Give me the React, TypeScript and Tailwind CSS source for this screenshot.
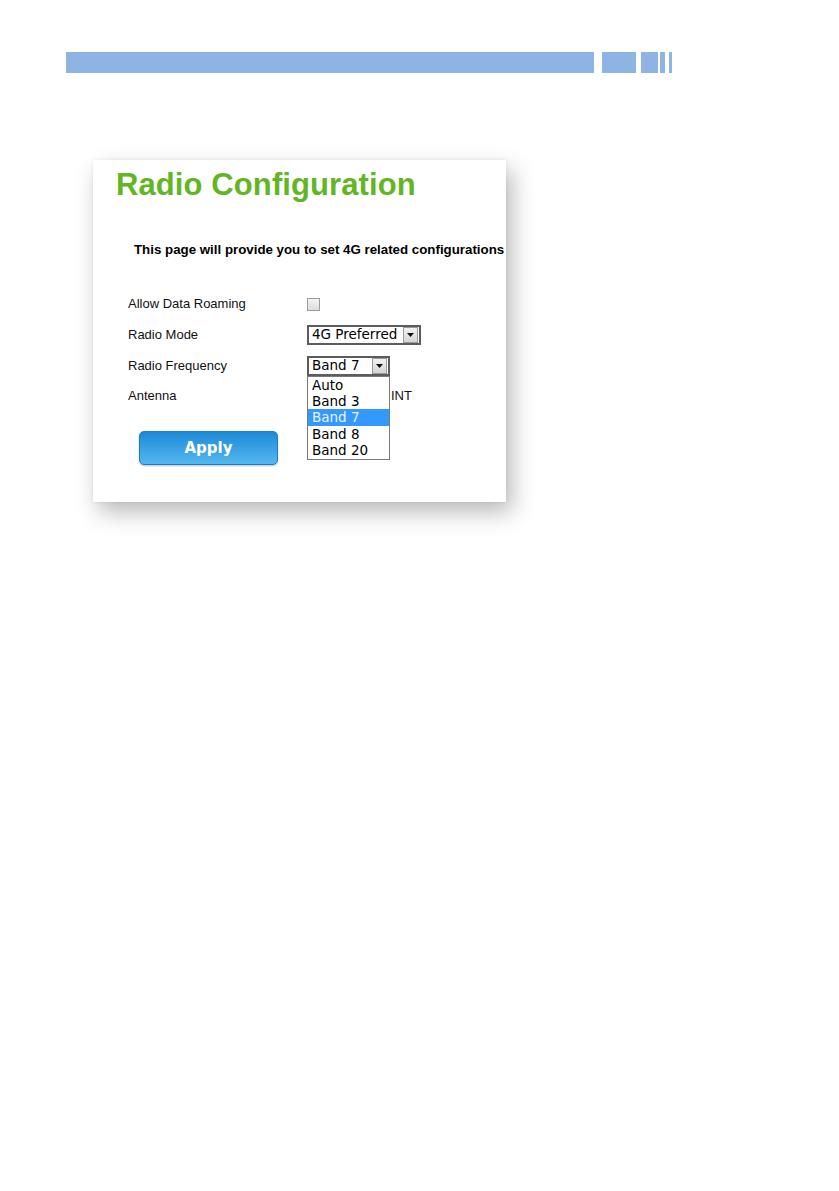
import React from "react";

const sans = { fontFamily: '"Liberation Sans", Arial, sans-serif' };
const verdana = { fontFamily: '"DejaVu Sans", Verdana, sans-serif' };

function Arrow() {
  return (
    <span className="flex h-[16px] w-[15px] items-center justify-center border border-[#9a9a9a] bg-gradient-to-b from-[#f2f2f2] to-[#d4d4d4]">
      <svg width="7" height="4" viewBox="0 0 7 4">
        <path d="M0 0h7L3.5 4z" fill="#111" />
      </svg>
    </span>
  );
}

const bands = ["Auto", "Band 3", "Band 7", "Band 8", "Band 20"];

export default function App() {
  return (
    <div className="h-[1191px] w-[839px] bg-white pt-[52px]" style={sans}>
      {/* header strip */}
      <div className="flex h-[21px] pl-[66px]">
        <div className="w-[528px] bg-[#8db4e2]" />
        <div className="ml-[8px] w-[34px] bg-[#8db4e2]" />
        <div className="ml-[5px] w-[17px] bg-[#8db4e2]" />
        <div className="ml-[2px] w-[5px] bg-[#8db4e2]" />
        <div className="ml-[4px] w-[3px] bg-[#8db4e2]" />
      </div>

      {/* screenshot card */}
      <div className="ml-[93px] mt-[87px] h-[342px] w-[413px] overflow-hidden bg-white pl-[23px] pt-[7px] shadow-[6px_10px_22px_rgba(0,0,0,0.28),0_0_3px_rgba(0,0,0,0.08)]">
        <h1 className="text-[31px] font-bold leading-[36px] tracking-[0.1px] text-[#62b624]">Radio Configuration</h1>
        <p className="ml-[18px] mt-[39px] whitespace-nowrap text-[13.3px] font-bold leading-[16px] text-black">
          This page will provide you to set 4G related configurations
        </p>

        <div className="ml-[12px] mt-[31px] grid grid-cols-[179px_auto] text-[13px] text-[#111]">
          <div className="flex h-[30px] items-center">Allow Data Roaming</div>
          <div className="flex h-[30px] items-center">
            <span className="h-[13px] w-[13px] border border-[#9c9c9c] bg-gradient-to-b from-[#f4f4f4] to-[#dcdcdc]" />
          </div>

          <div className="flex h-[31px] items-center">Radio Mode</div>
          <div className="flex h-[31px] items-center">
            <div className="flex h-[20px] w-[114px] items-center justify-between border-2 border-[#5c5c5c] pl-[3px] pr-[1px] text-[13.5px] text-black" style={verdana}>
              <span>4G Preferred</span>
              <Arrow />
            </div>
          </div>

          <div className="flex h-[31px] items-center">Radio Frequency</div>
          <div className="flex h-[31px] items-center">
            <div className="relative z-10">
              <div className="flex h-[20px] w-[83px] items-center justify-between border-2 border-[#5c5c5c] pl-[3px] pr-[1px] text-[13.5px] text-black" style={verdana}>
                <span>Band 7</span>
                <Arrow />
              </div>
              <ul className="absolute left-0 top-full w-[83px] border border-[#7a7a7a] bg-white text-[13.5px] leading-[16.4px] text-black" style={verdana}>
                {bands.map((b) => (
                  <li key={b} className={`pl-[4px] ${b === "Band 7" ? "bg-[#3399ff] text-[#eaf4ff]" : ""}`}>
                    {b}
                  </li>
                ))}
              </ul>
            </div>
          </div>

          <div className="flex h-[30px] items-center">Antenna</div>
          <div className="flex h-[30px] items-center">
            <span className="h-[13px] w-[13px] rounded-full border border-[#8a8a8a] bg-[#f0f0f0]" />
            <span className="ml-[52px] h-[13px] w-[13px] rounded-full border border-[#8a8a8a] bg-[#f0f0f0]" />
            <span className="ml-[6px]">INT</span>
          </div>
        </div>

        <button
          type="button"
          className="ml-[23px] mt-[20px] flex h-[34px] w-[139px] items-center justify-center rounded-[5px] border border-[#1a7fc4] bg-gradient-to-b from-[#1a8ad6] to-[#52b8f1] text-[15px] font-bold text-white shadow-[0_1px_2px_rgba(0,0,0,0.25)]"
          style={verdana}
        >
          Apply
        </button>
      </div>
    </div>
  );
}
